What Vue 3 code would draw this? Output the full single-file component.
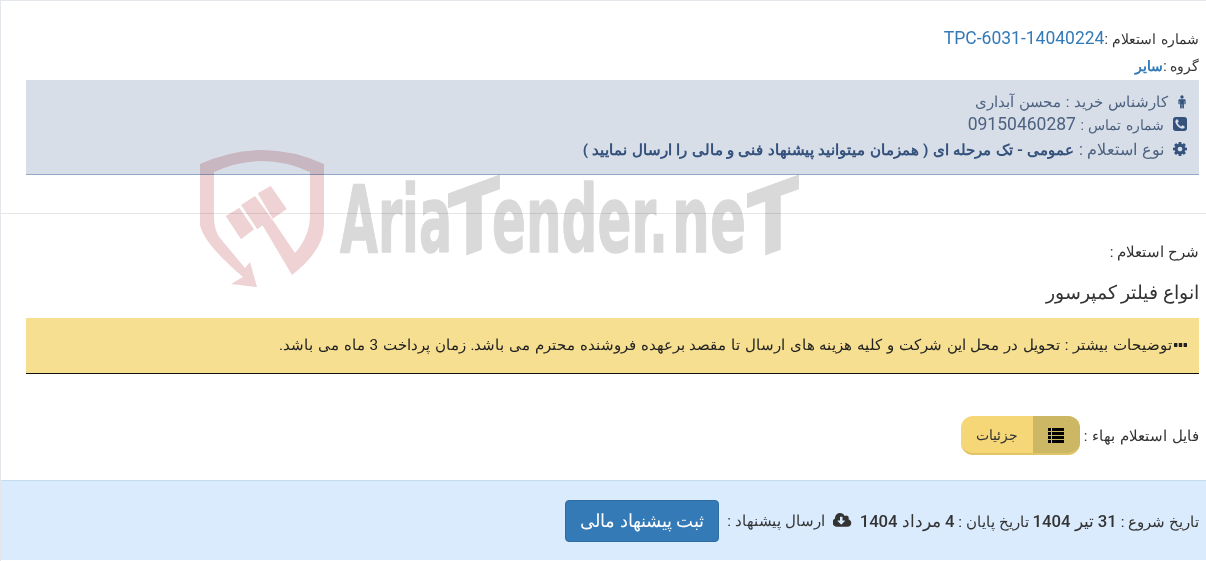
<template>
  <div class="page" dir="rtl">
    <section class="head">
      <div class="ref-row">
        <span>شماره استعلام :</span><a class="ref-no" dir="ltr">TPC-6031-14040224</a>
      </div>
      <div class="group-row">
        <span>گروه :</span><a class="group-name">سایر</a>
      </div>
      <div class="contact">
        <div class="contact-row">
          <svg class="ic male" viewBox="0 0 12 16"><circle cx="6" cy="2" r="2" /><path d="M3.200 4.600h5.600c.9 0 1.500.6 1.500 1.500v4c0 .9-1.500.9-1.500 0V6.800h-.5V15c0 1.300-2 1.300-2 0v-4.600h-.6V15c0 1.300-2 1.300-2 0V6.800h-.5v3.300c0 .9-1.500.9-1.500 0v-4c0-.9.6-1.500 1.500-1.500z" /></svg>
          <span>کارشناس خرید : محسن آبداری</span>
        </div>
        <div class="contact-row">
          <svg class="ic" viewBox="128 128 1536 1536"><path d="M1408 1193q0-11-2-16t-18-16.500-40.500-25-47.500-26.500-45.500-25-28.500-15q-5-3-19-13t-25-15-21-5q-15 0-36.500 20.500t-39.500 45-38.500 45-33.500 20.500q-7 0-16.500-3.500t-15.500-6.500-17-9.500-14-8.500q-99-55-170-126.500t-127-170.500q-2-3-8.500-14t-9.500-17-6.500-15.500-3.500-16.500q0-13 20.500-33.500t45-38.500 45-39.500 20.500-36.500q0-10-5-21t-15-25-13-19q-3-6-15-28.500t-25-45.500-26.500-47.500-25-40.500-16.500-18-16-2q-48 0-101 22-46 21-80 94.500t-34 130.500q0 16 2.500 34t5 30.500 9 33 10 29.500 12.500 33 11 30q60 164 216.500 320.500t320.500 216.500q6 2 30 11t33 12.500 29.500 10 33 9 30.500 5 34 2.500q57 0 130.500-34t94.500-80q22-53 22-101zm256-777v960q0 119-84.500 203.500t-203.500 84.500h-960q-119 0-203.500-84.500t-84.500-203.500v-960q0-119 84.500-203.500t203.500-84.500h960q119 0 203.500 84.500t84.500 203.500z" /></svg>
          <span>شماره تماس : <span class="phone">09150460287</span></span>
        </div>
        <div class="contact-row">
          <svg class="ic" viewBox="128 128 1536 1536"><path d="M1152 896q0-106-75-181t-181-75-181 75-75 181 75 181 181 75 181-75 75-181zm512-109v222q0 12-8 23t-20 13l-185 28q-19 54-39 91 35 50 107 138 10 12 10 25t-9 23q-27 37-99 108t-94 71q-12 0-26-9l-138-108q-44 23-91 38-16 136-29 186-7 28-36 28h-222q-14 0-24.500-8.500t-11.500-21.500l-28-184q-49-16-90-37l-141 107q-10 9-25 9-14 0-25-11-126-114-165-168-7-10-7-23 0-12 8-23 15-21 51-66.500t54-70.500q-27-50-41-99l-183-27q-13-2-21-12.500t-8-23.500v-222q0-12 8-23t19-13l186-28q14-46 39-92-40-57-107-138-10-12-10-24 0-10 9-23 26-36 98.500-107.500t94.500-71.500q13 0 26 10l138 107q44-23 91-38 16-136 29-186 7-28 36-28h222q14 0 24.500 8.500t11.500 21.500l28 184q49 16 90 37l142-107q9-9 24-9 13 0 25 10 129 119 165 170 7 8 7 22 0 12-8 23-15 21-51 66.500t-54 70.500q26 50 41 98l183 28q13 2 21 12.500t8 23.500z" /></svg>
          <span>نوع استعلام : <b>عمومی - تک مرحله ای ( همزمان میتوانید پیشنهاد فنی و مالی را ارسال نمایید )</b></span>
        </div>
      </div>
    </section>

    <hr class="divider" />

    <section class="body">
      <p class="desc-label">شرح استعلام :</p>
      <h3 class="title">انواع فیلتر کمپرسور</h3>
      <div class="notice">
        <svg class="dots" viewBox="0 0 13 4"><rect x="0" y="0" width="3.400" height="4" rx=".5" /><rect x="4.800" y="0" width="3.400" height="4" rx=".5" /><rect x="9.600" y="0" width="3.400" height="4" rx=".5" /></svg>
        <span>توضیحات بیشتر : تحویل در محل این شرکت و کلیه هزینه های ارسال تا مقصد برعهده فروشنده محترم می باشد. زمان پرداخت 3 ماه می باشد.</span>
      </div>
      <div class="file-row">
        <span>فایل استعلام بهاء :</span>
        <button class="details">
          <span class="details-icon">
            <svg class="list" viewBox="0 0 16 15"><g v-for="y in [0, 4, 8, 12]" :key="y"><rect x="0" :y="y" width="3" height="3" /><rect x="4" :y="y" width="12" height="3" /></g></svg>
          </span>
          <span class="details-text">جزئیات</span>
        </button>
      </div>
    </section>

    <footer class="dates">
      <span>تاریخ شروع : <b class="date">31 تیر 1404</b></span>
      <span>تاریخ پایان : <b class="date">4 مرداد 1404</b></span>
      <svg class="cloud" viewBox="0 128 1920 1536"><path d="M1216 928q0-14-9-23t-23-9h-224v-352q0-13-9.500-22.500t-22.500-9.500h-192q-13 0-22.500 9.500t-9.500 22.500v352h-224q-13 0-22.500 9.500t-9.500 22.500q0 14 9 23l352 352q9 9 23 9t23-9l351-351q10-12 10-24zm640 224q0 159-112.500 271.500t-271.500 112.500h-1088q-185 0-316.500-131.500t-131.500-316.500q0-130 70-240t188-165q-2-30-2-43 0-212 150-362t362-150q156 0 285.500 87t188.500 231q71-62 166-62 106 0 181 75t75 181q0 76-41 138 130 31 213.500 135.500t83.500 238.500z" /></svg>
      <span>ارسال پیشنهاد :</span>
      <button class="submit">ثبت پیشنهاد مالی</button>
    </footer>

    <!-- watermark logo, coordinates are page pixels -->
    <svg class="watermark" viewBox="0 0 1206 561">
      <path class="wm-red" d="M200 164Q262 136 324 164L324 225Q324 250 292 275L260 221 272 219 295 253Q310 236 310 215L310 172Q262 150 214 172L214 217Q214 230 220 238L245 268 250 262 257 287 231 284 243 277Q204 244 200 225Z" />
      <path class="wm-red" d="M225.700 216L239.300 207.700 254 229.300 241 239.300ZM241 205L255 196 271.700 218.700 257.300 229.300ZM257.700 193.300L270.700 186 286.700 209 272.700 218.700Z" />
      <text class="wm-text" x="340" y="252" textLength="112" lengthAdjust="spacingAndGlyphs">Aria</text>
      <text class="wm-text" transform="translate(474 252) skewY(-20) scale(.82 1)" text-anchor="middle">T</text>
      <text class="wm-text" x="492" y="252" textLength="176" lengthAdjust="spacingAndGlyphs">ender.</text>
      <text class="wm-text" x="672" y="252" textLength="74" lengthAdjust="spacingAndGlyphs">ne</text>
      <text class="wm-text" transform="translate(773 252) skewY(-20) scale(.82 1)" text-anchor="middle">T</text>
    </svg>
  </div>
</template>

<script setup>
</script>

<style scoped>
.page {
  position: relative;
  height: 561px;
  box-sizing: border-box;
  overflow: hidden;
  border-top: 1px solid #e3e6ea;
  border-left: 1px solid #e3e6ea;
  font-family: Roboto, sans-serif;
  font-size: 15.400px;
  color: #333;
  background: #fff;
}
.head {
  padding: 24px 7px 0 7px;
  margin-left: 18px;
}
.ref-row {
  height: 27px;
  line-height: 27px;
  font-size: 14.300px;
  word-spacing: 1px;
}
.ref-no {
  font-size: 17.500px;
  color: #337ab7;
}
.group-row {
  height: 28px;
  line-height: 28px;
  font-size: 14px;
}
.group-name {
  font-size: 14px;
  font-weight: 700;
  color: #337ab7;
}
.contact {
  height: 95px;
  box-sizing: border-box;
  padding-top: 10px;
  background: #d7dee8;
  border-bottom: 1px solid #8fa9c6;
  color: #4d6280;
}
.contact-row {
  display: flex;
  align-items: center;
  gap: 9px;
  height: 23px;
  padding-right: 12px;
  word-spacing: 1px;
}
.contact-row:nth-child(2) {
  height: 22px;
  font-size: 14.300px;
}
.contact-row:nth-child(3) {
  height: 28px;
  font-size: 16px;
  word-spacing: .6px;
}
.contact-row b {
  font-size: 15.300px;
  color: #34527c;
}
.phone {
  font-size: 17.500px;
}
.ic {
  width: 14px;
  height: 14px;
  fill: #34527c;
  flex: none;
}
.ic.male {
  width: 10px;
  height: 16px;
}
.divider {
  height: 1px;
  border: 0;
  margin: 38px 0 0;
  background: #e6e6e6;
}
.body {
  padding: 0 7px;
  margin-left: 18px;
}
.desc-label {
  margin: 27px 0 0;
  line-height: 22px;
}
.title {
  margin: 17px 0 0;
  font-size: 18.600px;
  font-weight: 500;
  line-height: 26px;
  color: #333;
}
.notice {
  display: flex;
  align-items: center;
  gap: 2px;
  height: 56px;
  box-sizing: border-box;
  margin-top: 12px;
  padding-right: 12px;
  padding-bottom: 2px;
  background: #f6df90;
  border-bottom: 1px solid #111;
  color: #222;
  font-size: 15.250px;
  word-spacing: 1px;
}
.dots {
  width: 13px;
  height: 4px;
  fill: #222;
  flex: none;
}
.file-row {
  display: flex;
  align-items: center;
  gap: 4px;
  margin-top: 42px;
  height: 39px;
  word-spacing: 1px;
}
.details {
  display: flex;
  width: 119px;
  height: 39px;
  padding: 0;
  overflow: hidden;
  border: 0;
  border-bottom: 2px solid #e0c466;
  border-radius: 12px;
  background: #f5d777;
  font: inherit;
  font-size: 14px;
  color: #333;
}
.details-icon {
  display: flex;
  align-items: center;
  justify-content: center;
  width: 47px;
  height: 39px;
  background: #ccb864;
}
.list {
  width: 16px;
  height: 15px;
  fill: #000;
}
.details-text {
  flex: 1;
  line-height: 38px;
}
.dates {
  display: flex;
  align-items: center;
  gap: 4px;
  height: 80px;
  box-sizing: border-box;
  margin-top: 25px;
  padding-right: 7px;
  background: #d9ebfd;
  border-top: 1px solid #c5dcf0;
}
.date {
  font-size: 16.700px;
  font-weight: 500;
}
.cloud {
  width: 19px;
  height: 15px;
  margin: 0 4px;
  fill: #333;
}
.submit {
  height: 42px;
  width: 154px;
  margin-right: 4px;
  border: 1px solid #2e6da4;
  border-radius: 4px;
  background: #337ab7;
  color: #fff;
  font: inherit;
  font-size: 18px;
}
.watermark {
  position: absolute;
  left: -1px;
  top: -1px;
  width: 1206px;
  height: 561px;
  pointer-events: none;
  mix-blend-mode: multiply;
  direction: ltr;
}
.wm-red {
  fill: #eed2d4;
}
.wm-text {
  font-family: "DejaVu Sans", sans-serif;
  font-size: 92px;
  font-weight: 700;
  fill: #d9d9d9;
  stroke: #d9d9d9;
  stroke-width: 1.500px;
  stroke-linejoin: round;
}
</style>
